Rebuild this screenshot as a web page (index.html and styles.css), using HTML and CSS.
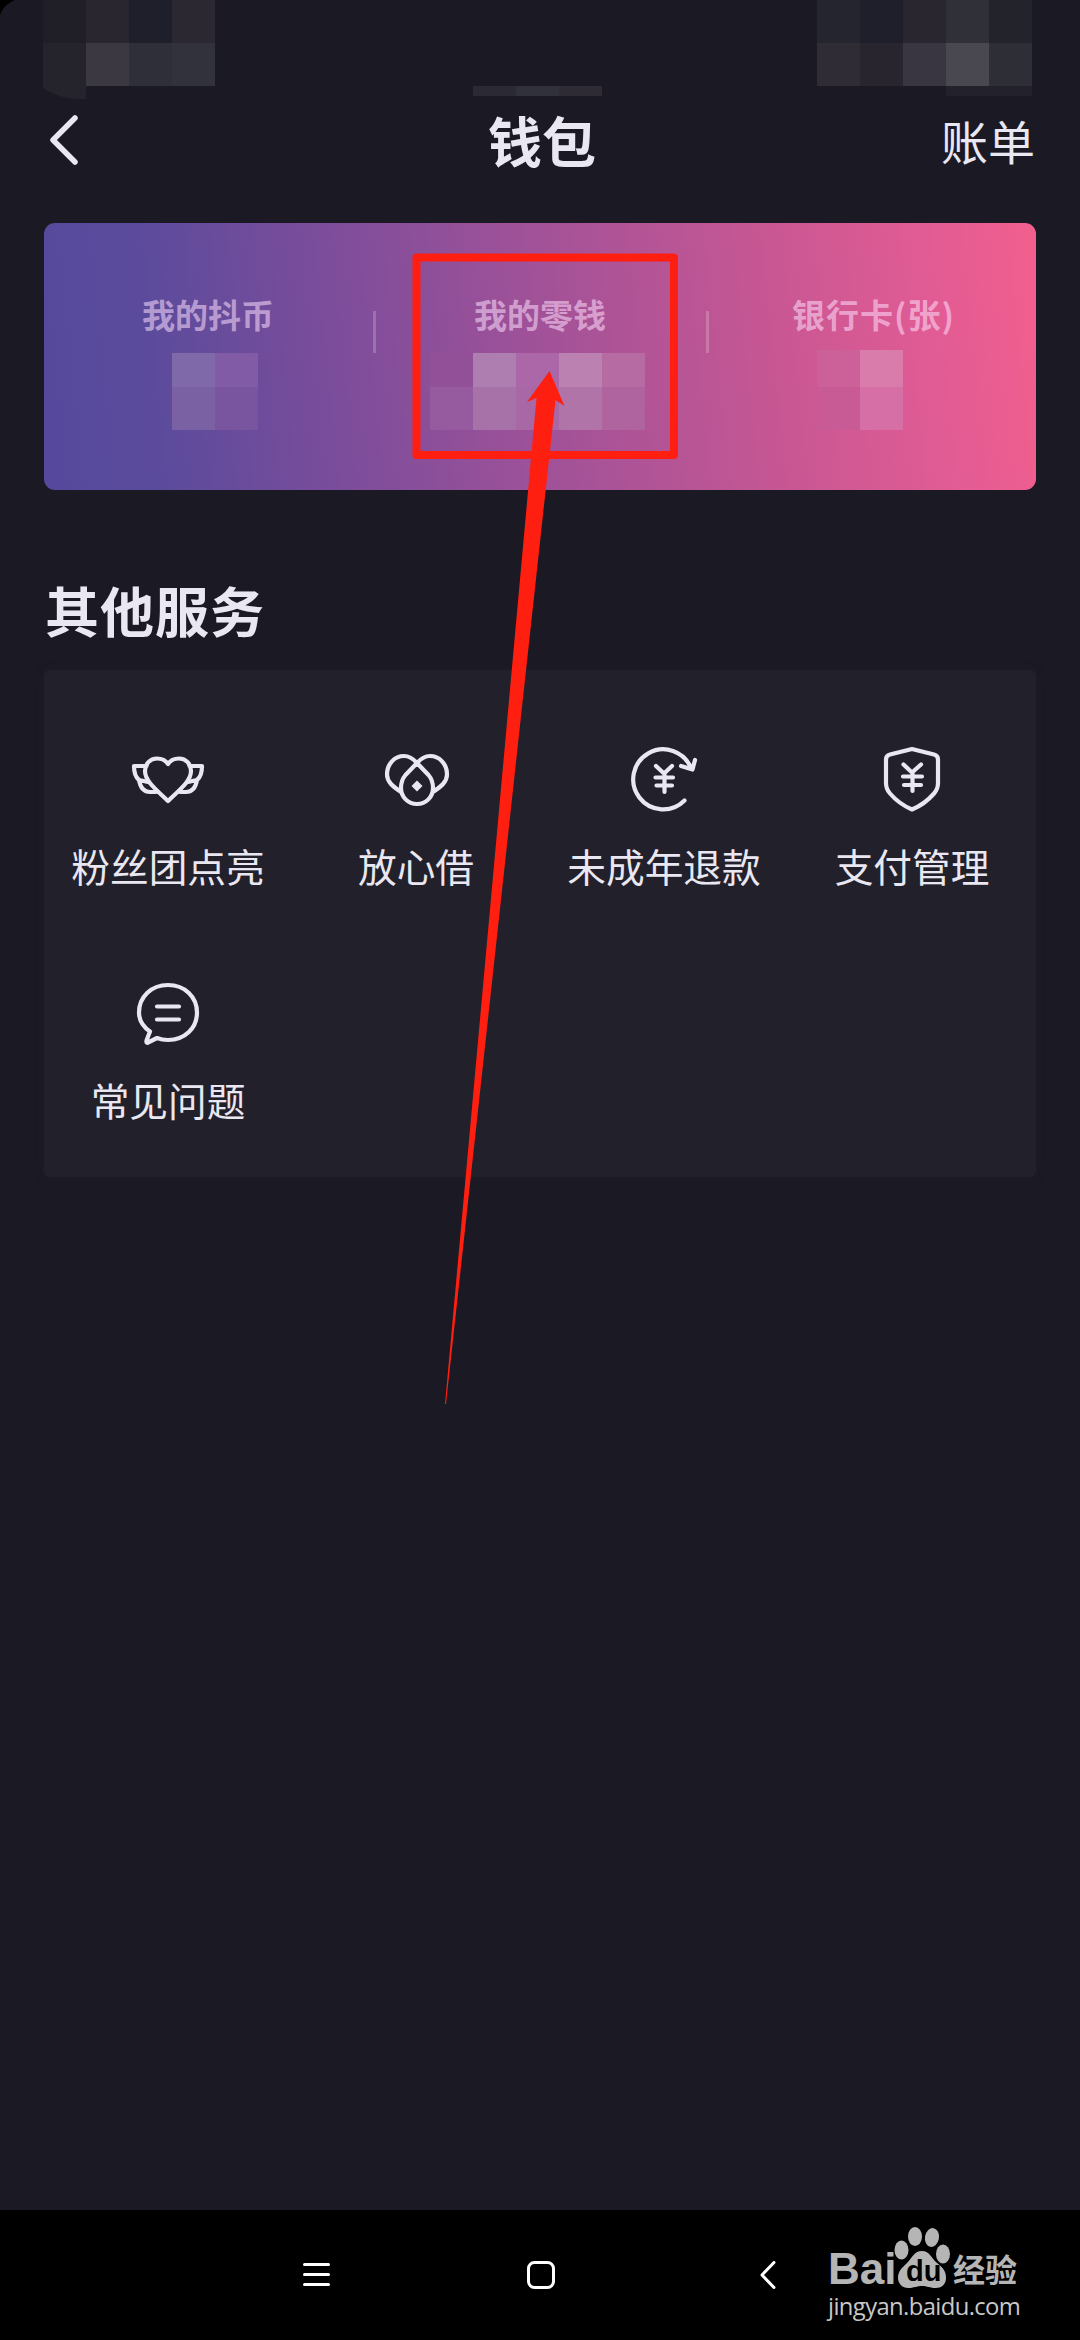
FILE: index.html
```html
<!DOCTYPE html>
<html lang="zh-CN">
<head>
<meta charset="utf-8">
<title>钱包</title>
<link rel="stylesheet" href="styles.css">
</head>
<body>
<div class="screen">
  <div class="status">
    <svg class="status-mosaic" width="1080" height="100" viewBox="0 0 1080 100" shape-rendering="crispEdges">
      <path fill="#000" shape-rendering="auto" d="M0 0H15Q4 4 0 15Z"/>
      <rect x="43" y="0" width="43" height="43" fill="#201e27"/>
      <rect x="86" y="0" width="43" height="43" fill="#29262f"/>
      <rect x="129" y="0" width="43" height="43" fill="#1e1f2a"/>
      <rect x="172" y="0" width="43" height="43" fill="#2b2831"/>
      <path fill="#25232c" shape-rendering="auto" d="M43 43H86V99H76Q58 98 43 88Z"/>
      <rect x="86" y="43" width="43" height="43" fill="#3b3841"/>
      <rect x="129" y="43" width="43" height="43" fill="#2f2f39"/>
      <rect x="172" y="43" width="43" height="43" fill="#32323d"/>
      <rect x="473" y="86" width="43" height="10" fill="#2b2933"/>
      <rect x="516" y="86" width="43" height="10" fill="#31313b"/>
      <rect x="559" y="86" width="43" height="10" fill="#2e2b34"/>
      <rect x="817" y="0" width="43" height="43" fill="#24252e"/>
      <rect x="860" y="0" width="43" height="43" fill="#1e1f2a"/>
      <rect x="903" y="0" width="43" height="43" fill="#292630"/>
      <rect x="946" y="0" width="43" height="43" fill="#303038"/>
      <rect x="989" y="0" width="43" height="43" fill="#23232c"/>
      <rect x="817" y="43" width="43" height="43" fill="#2f2c35"/>
      <rect x="860" y="43" width="43" height="43" fill="#28252f"/>
      <rect x="903" y="43" width="43" height="43" fill="#393641"/>
      <rect x="946" y="43" width="43" height="43" fill="#494851"/>
      <rect x="989" y="43" width="43" height="43" fill="#2e2e37"/>
      <rect x="946" y="86" width="86" height="10" fill="#23222c"/>
    </svg>
  </div>

  <header class="topbar">
    <svg class="back" width="30" height="52" viewBox="0 0 30 52"><path d="M26 4L4 26L26 48"/></svg>
    <h1 class="title">钱包</h1>
    <span class="bill">账单</span>
  </header>

  <section class="wallet">
    <div class="account">
      <span class="account-name">我的抖币</span>
      <svg class="amount coins" width="86" height="77" viewBox="0 0 86 77" shape-rendering="crispEdges">
        <rect width="43" height="34" fill="#8069a8"/><rect x="43" width="43" height="34" fill="#815ba5"/>
        <rect y="34" width="43" height="43" fill="#7961a3"/><rect x="43" y="34" width="43" height="43" fill="#78559e"/>
      </svg>
    </div>
    <div class="account">
      <span class="account-name">我的零钱</span>
      <svg class="amount change" width="215" height="77" viewBox="0 0 215 77" shape-rendering="crispEdges">
        <rect width="43" height="34" fill="#925098"/><rect x="43" width="43" height="34" fill="#ae7eb0"/><rect x="86" width="43" height="34" fill="#ab67a8"/><rect x="129" width="43" height="34" fill="#bb82b1"/><rect x="172" width="43" height="34" fill="#b66ba3"/>
        <rect y="34" width="43" height="43" fill="#965b9e"/><rect x="43" y="34" width="43" height="43" fill="#a672a8"/><rect x="86" y="34" width="43" height="43" fill="#a867a5"/><rect x="129" y="34" width="43" height="43" fill="#b174a9"/><rect x="172" y="34" width="43" height="43" fill="#b0649f"/>
      </svg>
    </div>
    <div class="account">
      <span class="account-name cards-name">银行卡(张)</span>
      <svg class="amount cards" width="86" height="80" viewBox="0 0 86 80" shape-rendering="crispEdges">
        <rect width="43" height="37" fill="#cb6198"/><rect x="43" width="43" height="37" fill="#d97bab"/>
        <rect y="37" width="43" height="43" fill="#c85b96"/><rect x="43" y="37" width="43" height="43" fill="#d66fa5"/>
      </svg>
    </div>
  </section>

  <h2 class="section-title">其他服务</h2>

  <section class="services">
    <div class="service">
      <svg class="icon" width="80" height="80" viewBox="0 0 80 80">
        <path d="M40 25C37 20.500 33 19.500 29 19.500C22 19.500 17 25 17 32C17 41 25 48 40 62C55 48 63 41 63 32C63 25 58 19.500 51 19.500C47 19.500 43 20.500 40 25Z"/>
        <path d="M18.500 27H6Q6 37 11 41L20 43M61.500 27H74Q74 37 69 41L60 43M11 41Q13 53 22 53H28M69 41Q67 53 58 53H52"/>
      </svg>
      <span class="service-name">粉丝团点亮</span>
    </div>
    <div class="service">
      <svg class="icon" width="80" height="80" viewBox="0 0 80 80">
        <path d="M25 53C17 47.500 11 43 11 35.500C11 25 18.500 17 28 17C32 17 37 19.500 41 24C45 19.500 50 17 54 17C63.500 17 71 25 71 35.500C71 43 65 47.500 57 53M41 24L29.500 36C26.500 39.500 25 43.500 25 49C25 58 32 65 41 65S57 58 57 49C57 43.500 55.500 39.500 52.500 36Z"/>
        <path class="solid" d="M41 41.500L46.500 47L41 52.500L35.500 47Z"/>
      </svg>
      <span class="service-name">放心借</span>
    </div>
    <div class="service">
      <svg class="icon" width="80" height="80" viewBox="0 0 80 80">
        <path d="M60.500 61.500A30 30 0 1 1 67 29M57 27L68.500 30.500L71 21M32 27L40 34.500L48 27M31.500 38.500H49M32.500 46.500H48M40.500 35V53"/>
      </svg>
      <span class="service-name">未成年退款</span>
    </div>
    <div class="service">
      <svg class="icon" width="80" height="80" viewBox="0 0 80 80">
        <path d="M40 10L62 15.500Q66 16.500 66 20.500V44Q66 50 62 54.500Q53 65 40 70.500Q27 65 18 54.500Q14 50 14 44V20.500Q14 16.500 18 15.500ZM31.500 25.500L40 33.500L49 25.500M31 37.500H50M32 46H49M40.500 34V52"/>
      </svg>
      <span class="service-name">支付管理</span>
    </div>
    <div class="service">
      <svg class="icon" width="80" height="80" viewBox="0 0 80 80">
        <path d="M22 58.500C14 53 11 46 11 39.500C11 24 23 12 40 12S69 24 69 39.500S57 67 40 67Q34 67 29 65L20 69.500Q18 70.500 18.500 67.500ZM29 33.500H51M29 46.500H51"/>
      </svg>
      <span class="service-name">常见问题</span>
    </div>
  </section>

  <nav class="navbar">
    <svg class="nav-menu" width="28" height="28" viewBox="0 0 28 28"><path d="M1.500 3.500H25.500M1.500 13.500H25.500M1.500 23.500H25.500"/></svg>
    <svg class="nav-home" width="28" height="28" viewBox="0 0 28 28"><rect x="1.500" y="1.500" width="25" height="25" rx="6"/></svg>
    <svg class="nav-back" width="16" height="28" viewBox="0 0 16 28"><path d="M14 1.500L2 14L14 26.500"/></svg>
    <div class="brand">
      <div class="brand-row">
        <span class="brand-bai">Bai</span>
        <div class="brand-paw">
          <svg width="58" height="64" viewBox="0 0 58 64">
            <ellipse cx="7.500" cy="25" rx="7" ry="9.500"/><ellipse cx="21" cy="11.500" rx="7" ry="9.500"/>
            <ellipse cx="38" cy="12.500" rx="7" ry="9.500" transform="rotate(10 38 12.500)"/><ellipse cx="49" cy="29" rx="7" ry="9.500"/>
            <path d="M28 26C36 26 37 33 43 38C49 43 52 46 52 53C52 59 48 63 42 63C36 63 33 61 28 61C23 61 20 63 14 63C8 63 4 58 4 53C4 46 8 43 13 38C19 32 20 26 28 26Z"/>
          </svg>
          <span class="brand-du">du</span>
        </div>
        <span class="brand-cn">经验</span>
      </div>
      <span class="brand-url">jingyan.baidu.com</span>
    </div>
  </nav>

  <svg class="annotation" width="1080" height="1420" viewBox="0 0 1080 1420">
    <rect x="416.500" y="257.500" width="257.500" height="197.500"/>
    <path d="M549.500 371L564.500 406L555.500 400L446 1404H445L536.500 398L527 402Z"/>
  </svg>
</div>
</body>
</html>
```
FILE: styles.css
```css
* {
  box-sizing: border-box;
}

body {
  margin: 0;
  background: #1b1924;
  color: #e9e7f1;
  font-family: "Noto Sans CJK SC", "Noto Sans", sans-serif;
}

svg {
  display: block;
  flex: none;
}

.screen {
  position: relative;
  display: flex;
  flex-direction: column;
  width: 1080px;
  height: 2340px;
  overflow: hidden;
}

.status {
  height: 96px;
  flex: none;
}

.topbar {
  display: grid;
  grid-template-columns: 1fr auto 1fr;
  align-items: center;
  height: 127px;
  padding: 0 45px 39px 49px;
  flex: none;
}

.back {
  fill: none;
  stroke: #e9e7f1;
  stroke-width: 5.5;
  stroke-linecap: round;
  stroke-linejoin: round;
}

.title {
  margin: 0;
  font-size: 54px;
  line-height: 80px;
  font-weight: 700;
}

.bill {
  justify-self: end;
  font-size: 47px;
  line-height: 80px;
}

.wallet {
  display: grid;
  grid-template-columns: 332px 333px 327px;
  height: 267px;
  margin: 0 44px;
  border-radius: 11px;
  background: linear-gradient(84deg, #55499d 0%, #5c4b9c 12%, #7c4d9b 30%, #a45298 52%, #c95793 74%, #e35c94 90%, #f25f8d 100%);
  flex: none;
}

.account {
  display: flex;
  flex-direction: column;
  padding-top: 66px;
  background: linear-gradient(rgba(255, 255, 255, .2), rgba(255, 255, 255, .2)) right 0 top 88px / 3px 42px no-repeat;
}

.account:last-child {
  background: none;
}

.account-name {
  height: 64px;
  padding-left: 98px;
  font-size: 33px;
  line-height: 50px;
  font-weight: 700;
  color: rgba(255, 225, 255, .55);
}

.account-name.cards-name {
  height: 61px;
  padding-left: 83px;
  letter-spacing: 1px;
}

.coins {
  margin-left: 128px;
}

.change {
  margin-left: 54px;
}

.cards {
  margin-left: 108px;
}

.section-title {
  margin: 79px 0 20px 45px;
  font-size: 54px;
  line-height: 81px;
  font-weight: 700;
  letter-spacing: 1px;
}

.services {
  display: grid;
  grid-template-columns: repeat(4, 1fr);
  grid-auto-rows: 234px;
  height: 507px;
  margin: 0 44px;
  padding-top: 69px;
  border-radius: 6px;
  background: #22202b;
  box-shadow: 0 0 8px #201e29;
  flex: none;
}

.service {
  display: flex;
  flex-direction: column;
  align-items: center;
  gap: 17px;
}

.icon {
  fill: none;
  stroke: #e9e7f1;
  stroke-width: 4.2;
  stroke-linecap: round;
  stroke-linejoin: round;
}

.solid {
  fill: #e9e7f1;
  stroke: none;
}

.service-name {
  font-size: 38.700px;
  line-height: 58px;
  white-space: nowrap;
}

.navbar {
  display: flex;
  align-items: flex-start;
  height: 130px;
  margin-top: auto;
  padding: 51px 0 0 303px;
  background: #000;
  fill: none;
  stroke: #fff;
  stroke-width: 3;
  stroke-linecap: round;
  stroke-linejoin: round;
  flex: none;
}

.nav-home {
  margin-left: 196px;
}

.nav-back {
  margin-left: 205px;
}

.brand {
  display: flex;
  flex-direction: column;
  margin: -36px 0 0 52px;
  color: #b5b5b5;
  fill: #b5b5b5;
  stroke: none;
}

.brand-row {
  display: flex;
  align-items: flex-end;
  height: 64px;
}

.brand-bai {
  width: 66px;
  height: 40px;
  font: 700 44px/40px "Liberation Sans", sans-serif;
}

.brand-paw {
  position: relative;
}

.brand-du {
  position: absolute;
  left: 12px;
  top: 29px;
  font: 700 29px/34px "Liberation Sans", sans-serif;
  color: #000;
}

.brand-cn {
  height: 42px;
  padding-left: 1px;
  font-size: 32px;
  line-height: 42px;
  font-weight: 700;
}

.brand-url {
  margin-top: 4px;
  font: 23.800px/26px "Open Sans", sans-serif;
  letter-spacing: -.6px;
  color: #c8c8c8;
}

.annotation {
  position: absolute;
  left: 0;
  top: 0;
  fill: #ff1f10;
}

.annotation rect {
  fill: none;
  stroke: #ff1f10;
  stroke-width: 8;
  stroke-linejoin: round;
}
```
